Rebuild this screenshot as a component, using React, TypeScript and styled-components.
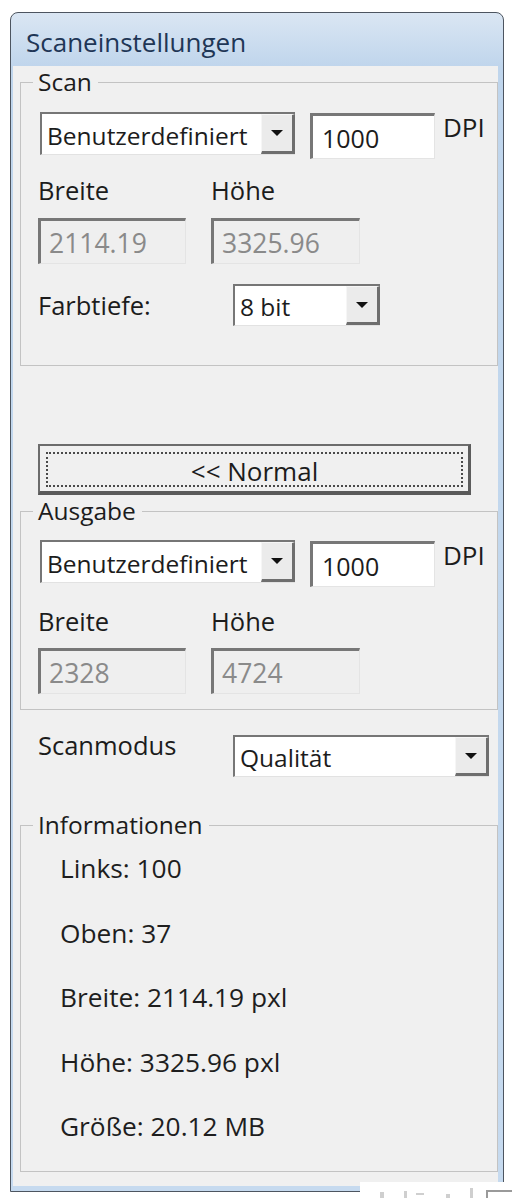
import React from "react";
import styled, { createGlobalStyle } from "styled-components";

const Global = createGlobalStyle`
  html, body { margin: 0; padding: 0; background: #ffffff; }
  body { font-family: "Open Sans", "Noto Sans", sans-serif; color: #1c1c1c; }
`;

const Page = styled.div`
  position: relative;
  height: 1198px;
  padding-top: 12px;
  box-sizing: border-box;
  overflow: hidden;
`;

const Window = styled.div`
  margin-left: 10px;
  width: 494px;
  box-sizing: border-box;
  border: 1px solid #4d5560;
  border-radius: 8px 8px 0 0;
  background: linear-gradient(#dae6f3, #bfd5ec 54px, #c6daef);
  padding: 0 5px 5px 2px;
`;

const TitleBar = styled.div`
  height: 53px;
  box-sizing: border-box;
  display: flex;
  align-items: center;
  padding: 5px 0 0 13px;
  font-size: 26px;
  color: #1f3656;
`;

const Content = styled.div`
  background: #f0f0f0;
  height: 1120px;
  box-sizing: border-box;
  padding: 1px 1px 0 7px;
`;

const Group = styled.fieldset<{ $mt: number }>`
  margin: ${(p) => p.$mt}px 0 0 0;
  padding: 0;
  width: 478px;
  box-sizing: border-box;
  min-width: 0;
  border: 1px solid #c3c3c3;
`;

const Legend = styled.legend`
  margin-left: 12px;
  padding: 0 6px 0 5px;
  font-size: 24.5px;
  line-height: 30px;
  color: #1c1c1c;
`;

const GroupBody = styled.div<{ $pt: number; $pb: number; $pl: number }>`
  display: flex;
  flex-direction: column;
  padding: ${(p) => p.$pt}px 0 ${(p) => p.$pb}px ${(p) => p.$pl}px;
`;

const ResRow = styled.div`
  display: flex;
  align-items: flex-start;
  margin-left: 2px;
`;

const Combo = styled.div<{ $w: number; $h: number }>`
  display: flex;
  width: ${(p) => p.$w}px;
  height: ${(p) => p.$h}px;
  box-sizing: border-box;
  border-style: solid;
  border-width: 2px 0 1px 2px;
  border-color: #767676 #e2e2e2 #e2e2e2 #767676;
  background: #ffffff;
`;

const ComboText = styled.span`
  flex: 1;
  display: flex;
  align-items: center;
  padding: 2px 0 0 5px;
  font-size: 24.5px;
  color: #1c1c1c;
  white-space: nowrap;
  overflow: hidden;
`;

const ComboButton = styled.span`
  width: 34px;
  flex: none;
  display: flex;
  align-items: center;
  justify-content: center;
  background: #ebebeb;
  box-sizing: border-box;
  border-style: solid;
  border-width: 1px 3px 3px 1px;
  border-color: #f6f6f6 #6e6e6e #6e6e6e #f6f6f6;
`;

const Arrow = styled.span`
  width: 0;
  height: 0;
  border-left: 6px solid transparent;
  border-right: 6px solid transparent;
  border-top: 6px solid #111;
`;

const Field = styled.div<{ $w: number; $disabled?: boolean }>`
  width: ${(p) => p.$w}px;
  height: 46px;
  box-sizing: border-box;
  display: flex;
  align-items: center;
  border-style: solid;
  border-width: 3px 1px 1px 3px;
  border-color: #777777 #e4e4e4 #e4e4e4 #777777;
  background: ${(p) => (p.$disabled ? "#efefef" : "#ffffff")};
  color: ${(p) => (p.$disabled ? "#8a8a8a" : "#1c1c1c")};
  padding: 2px 0 0 ${(p) => (p.$disabled ? 8 : 9)}px;
  font-size: ${(p) => (p.$disabled ? 26.5 : 25)}px;
`;

const DpiField = styled(Field)`
  margin-left: 15px;
  margin-top: 1px;
`;

const Unit = styled.span`
  margin: 0 0 0 8px;
  font-size: 26px;
  line-height: 30px;
`;

const Pair = styled.div<{ $mt: number }>`
  display: grid;
  grid-template-columns: 173px 149px;
  margin-top: ${(p) => p.$mt}px;
`;

const Label = styled.span`
  font-size: 25.5px;
  line-height: 30px;
  color: #1c1c1c;
`;

const LabeledRow = styled.div<{ $mt: number; $align: string }>`
  display: grid;
  grid-template-columns: 195px auto;
  align-items: ${(p) => p.$align};
  margin-top: ${(p) => p.$mt}px;
`;

const ModeRow = styled(LabeledRow)`
  margin-left: 18px;
`;

const ComboSlot = styled.div<{ $mt: number }>`
  margin-top: ${(p) => p.$mt}px;
`;

const ToggleButton = styled.button`
  display: block;
  margin: 78px 0 0 18px;
  width: 433px;
  height: 51px;
  box-sizing: border-box;
  padding: 6px 5px 4px 6px;
  background: #f0f0f0;
  border-style: solid;
  border-width: 2px 3px 4px 2px;
  border-color: #6c6c6c #5c5c5c #5a5a5a #6c6c6c;
  font-family: "Open Sans", "Noto Sans", sans-serif;
`;

const FocusRing = styled.span`
  display: flex;
  align-items: center;
  justify-content: center;
  height: 100%;
  box-sizing: border-box;
  border: 2px dotted #4a4a4a;
  font-size: 26px;
  color: #1c1c1c;
  padding-top: 2px;
`;

const InfoLine = styled.div`
  font-size: 26.3px;
  line-height: 30px;
  color: #1e1e1e;
  & + & {
    margin-top: 34.5px;
  }
`;

const Corner = styled.div`
  position: absolute;
  right: 0;
  bottom: 0;
  width: 152px;
  height: 16px;
  background: #ffffff;
  display: flex;
  align-items: flex-end;
`;

export default function App() {
  return (
    <Page>
      <Global />
      <Window>
        <TitleBar>Scaneinstellungen</TitleBar>
        <Content>
          <Group $mt={0}>
            <Legend>Scan</Legend>
            <GroupBody $pt={15} $pb={39} $pl={0}>
              <Resolution width="2114.19" height="3325.96" pt={0} pb={0} gap1={16} gap2={13} />
              <GroupBody $pt={0} $pb={0} $pl={17}>
                <LabeledRow $mt={20} $align="center">
                  <Label>Farbtiefe:</Label>
                  <Select w={147} h={42} value="8 bit" />
                </LabeledRow>
              </GroupBody>
            </GroupBody>
          </Group>

          <ToggleButton type="button">
            <FocusRing>&lt;&lt; Normal</FocusRing>
          </ToggleButton>

          <Group $mt={1}>
            <Legend>Ausgabe</Legend>
            <Resolution width="2328" height="4724" pt={14} pb={15} gap1={19} gap2={12} />
          </Group>

          <ModeRow $mt={20} $align="start">
            <Label>Scanmodus</Label>
            <ComboSlot $mt={5}>
              <Select w={256} h={42} value="Qualität" />
            </ComboSlot>
          </ModeRow>

          <Group $mt={33}>
            <Legend>Informationen</Legend>
            <GroupBody $pt={13} $pb={30} $pl={39}>
              <InfoLine>Links: 100</InfoLine>
              <InfoLine>Oben: 37</InfoLine>
              <InfoLine>Breite: 2114.19 pxl</InfoLine>
              <InfoLine>Höhe: 3325.96 pxl</InfoLine>
              <InfoLine>Größe: 20.12 MB</InfoLine>
            </GroupBody>
          </Group>
        </Content>
      </Window>
      <Corner>
        <svg width="152" height="16" viewBox="0 0 152 16">
          <g fill="#cfcfcf">
            <rect x="20" y="10" width="4" height="6" />
            <rect x="44" y="9" width="3" height="7" />
            <rect x="56" y="11" width="8" height="2" />
            <rect x="86" y="12" width="4" height="4" />
            <rect x="110" y="6" width="3" height="10" />
          </g>
          <rect x="126" y="8" width="26" height="2" fill="#9a9a9a" />
          <rect x="126" y="8" width="2" height="8" fill="#9a9a9a" />
        </svg>
      </Corner>
    </Page>
  );
}

type SelectProps = { w: number; h: number; value: string };
function Select({ w, h, value }: SelectProps) {
  return (
    <Combo $w={w} $h={h}>
      <ComboText>{value}</ComboText>
      <ComboButton>
        <Arrow />
      </ComboButton>
    </Combo>
  );
}

type ResProps = { width: string; height: string; pt: number; pb: number; gap1: number; gap2: number };
function Resolution({ width, height, pt, pb, gap1, gap2 }: ResProps) {
  return (
    <GroupBody $pt={pt} $pb={pb} $pl={17}>
      <ResRow>
        <Select w={255} h={43} value="Benutzerdefiniert" />
        <DpiField $w={125}>1000</DpiField>
        <Unit>DPI</Unit>
      </ResRow>
      <Pair $mt={gap1}>
        <Label>Breite</Label>
        <Label>Höhe</Label>
      </Pair>
      <Pair $mt={gap2}>
        <Field $w={148} $disabled>
          {width}
        </Field>
        <Field $w={149} $disabled>
          {height}
        </Field>
      </Pair>
    </GroupBody>
  );
}
